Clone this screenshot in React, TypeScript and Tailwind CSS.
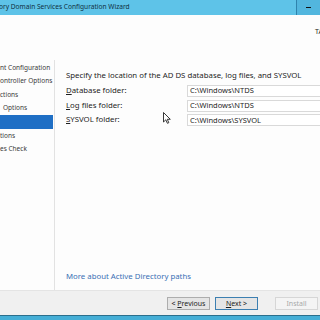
import React from 'react';

const NAV_ITEMS: { label: string; indent: string; active?: boolean }[] = [
  { label: 'nt Configuration', indent: 'pl-0' },
  { label: 'ontroller Options', indent: 'pl-0' },
  { label: 'ctions', indent: 'pl-0' },
  { label: 'Options', indent: 'pl-[3px]' },
  { label: '', indent: 'pl-0', active: true },
  { label: 'tions', indent: 'pl-0' },
  { label: 'es Check', indent: 'pl-0' },
];

const PATHS = [
  { key: 'D', rest: 'atabase folder:', value: 'C:\\Windows\\NTDS' },
  { key: 'L', rest: 'og files folder:', value: 'C:\\Windows\\NTDS' },
  { key: 'S', rest: 'YSVOL folder:', value: 'C:\\Windows\\SYSVOL' },
];

function Cursor() {
  return (
    <svg width="8" height="12" viewBox="0 0 8 12" className="absolute left-[108px] top-[52px]">
      <path d="M0.5 0.5 L0.5 10 L2.8 7.8 L4.4 11.3 L5.8 10.7 L4.3 7.3 L7.3 7.3 Z" fill="#fff" stroke="#222" strokeWidth="0.9" strokeLinejoin="round" />
    </svg>
  );
}

function WizardButton({
  accel,
  before,
  after,
  primary,
  disabled,
}: {
  accel?: string;
  before?: string;
  after?: string;
  primary?: boolean;
  disabled?: boolean;
}) {
  return (
    <button
      type="button"
      className={`flex h-[13px] w-[43px] items-center justify-center whitespace-pre border text-[7px] leading-none ${
        disabled
          ? 'border-[#d6d6d6] bg-[#f4f4f4] text-[#a8a8a8]'
          : primary
            ? 'border-[#3c7fb1] bg-[#e5e5e5] text-[#1e1e1e]'
            : 'border-[#adadad] bg-[#e5e5e5] text-[#1e1e1e]'
      }`}
    >
      {before}
      {accel && <span className="underline">{accel}</span>}
      {after}
    </button>
  );
}

export default function App() {
  return (
    <div className="flex h-[320px] w-[320px] flex-col overflow-hidden bg-[#fdfdfd] font-['Noto_Sans',sans-serif] text-[#1e1e1e]">
      {/* title bar */}
      <div className="flex h-[15px] shrink-0 items-center bg-[#5ec3e8]">
        <div className="flex-1 overflow-hidden whitespace-nowrap text-[6.6px] leading-none text-[#10303f]">
          <span className="ml-[-1px]">ory Domain Services Configuration Wizard</span>
        </div>
        <div className="flex h-full w-[24px] items-center justify-center border-l border-[#2f83ad] bg-[#52b6de]">
          <div className="h-[1.5px] w-[5px] bg-[#111]" />
        </div>
      </div>

      {/* header */}
      <div className="flex h-[45px] shrink-0 items-start overflow-hidden whitespace-nowrap pl-[315px] pt-[13px] text-[7px] leading-none">
        TARGET SERVER
      </div>

      {/* body */}
      <div className="flex min-h-0 flex-1">
        <nav className="flex w-[55px] shrink-0 flex-col border-r border-[#e2e2e2] pt-[1px] pb-[10px]">
          {NAV_ITEMS.map((item, i) => (
            <div
              key={i}
              className={`flex h-[13.6px] items-center overflow-hidden whitespace-nowrap text-[6.5px] leading-none ${item.indent} ${
                item.active ? 'mr-[1px] bg-[#1f6fc5] text-white' : 'text-[#3a3a3a]'
              }`}
            >
              {item.label}
            </div>
          ))}
        </nav>

        <main className="relative flex min-w-0 flex-1 flex-col pl-[11px] pt-[10px] pb-[9px] text-[7.8px]">
          <p className="h-[10px] whitespace-nowrap leading-[10px]">
            Specify the location of the AD DS database, log files, and SYSVOL
          </p>
          <div className="mt-[5px] flex flex-col gap-[2.6px]">
            {PATHS.map((p) => (
              <div key={p.value + p.key} className="flex h-[12px] items-center">
                <label className="w-[121px] shrink-0 whitespace-nowrap">
                  <span className="underline">{p.key}</span>
                  {p.rest}
                </label>
                <div className="flex h-full flex-1 items-center whitespace-nowrap border border-r-0 border-[#d9d9d9] bg-white pl-[2px] text-[7.5px]">
                  {p.value}
                </div>
              </div>
            ))}
          </div>
          <Cursor />
          <a className="mt-auto h-[10px] whitespace-nowrap leading-[10px] text-[#3a70b5]">
            More about Active Directory paths
          </a>
        </main>
      </div>

      {/* footer */}
      <div className="flex h-[25px] shrink-0 items-center gap-[5px] border-t border-[#e4e4e4] bg-[#f0f0f0] pl-[167px]">
        <WizardButton before="< " accel="P" after="revious" />
        <WizardButton accel="N" after="ext >" primary />
        <div className="w-[7px]" />
        <WizardButton after="Install" disabled />
      </div>
      <div className="h-[5px] shrink-0 border-t border-[#2b6f8c] bg-[#45aed6]" />
    </div>
  );
}
